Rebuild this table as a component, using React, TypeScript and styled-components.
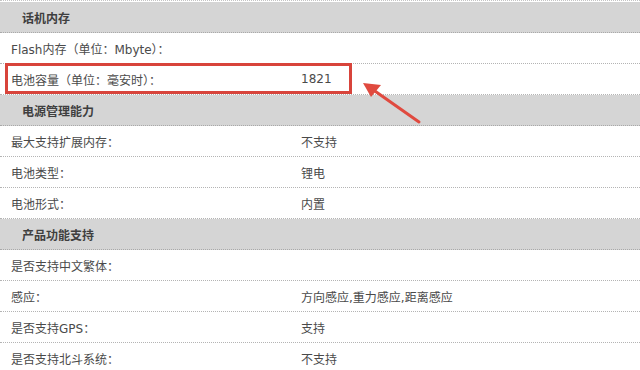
import React from "react";
import styled, { createGlobalStyle } from "styled-components";

// 参数表的数据
type Row = { kind: "group"; title: string } | { kind: "item"; label: string; value?: string; mark?: boolean };

const ROWS: Row[] = [
  { kind: "group", title: "话机内存" },
  { kind: "item", label: "Flash内存（单位：Mbyte）：" },
  { kind: "item", label: "电池容量（单位：毫安时）：", value: "1821", mark: true },
  { kind: "group", title: "电源管理能力" },
  { kind: "item", label: "最大支持扩展内存：", value: "不支持" },
  { kind: "item", label: "电池类型：", value: "锂电" },
  { kind: "item", label: "电池形式：", value: "内置" },
  { kind: "group", title: "产品功能支持" },
  { kind: "item", label: "是否支持中文繁体：" },
  { kind: "item", label: "感应：", value: "方向感应,重力感应,距离感应" },
  { kind: "item", label: "是否支持GPS：", value: "支持" },
  { kind: "item", label: "是否支持北斗系统：", value: "不支持" },
];

const GlobalStyle = createGlobalStyle`
  html, body {
    margin: 0;
    padding: 0;
    background: #fff;
    overflow: hidden;
  }
  body {
    font-family: "DejaVu Sans", "Noto Sans CJK SC", sans-serif;
  }
`;

const App: React.FC = () => {
  return (
    <>
      <GlobalStyle />
      <Page>
        <Table>
          {ROWS.map((row, i) =>
            row.kind === "group" ? (
              <GroupRow key={i}>{row.title}</GroupRow>
            ) : (
              <ItemRow key={i}>
                <Label>{row.label}</Label>
                <Value>{row.value}</Value>
                {row.mark && <Highlight />}
              </ItemRow>
            )
          )}
        </Table>
        {/* 指向电池容量的红色箭头 */}
        <Arrow width="80" height="60" viewBox="0 0 80 60">
          <line x1="59" y1="42" x2="12" y2="9" stroke="#e04a3f" strokeWidth="3" strokeLinecap="round" />
          <polygon points="3,3 21,5 11,17" fill="#e04a3f" />
        </Arrow>
      </Page>
    </>
  );
};

export default App;

const Page = styled.div`
  position: relative;
  width: 640px;
  height: 370px;
  overflow: hidden;
`;

const Table = styled.div`
  display: flex;
  flex-direction: column;
  padding-top: 1px;
  border-top: 1px dotted #c4c4c4;
`;

const GroupRow = styled.div`
  height: 30px;
  display: flex;
  align-items: center;
  padding-left: 22px;
  background: #d5d5d5;
  border-bottom: 1px dotted #a9a9a9;
  font-size: 12px;
  font-weight: bold;
  color: #3f3f3f;
`;

const ItemRow = styled.div`
  position: relative;
  height: 30px;
  display: grid;
  grid-template-columns: 301px 1fr;
  align-items: center;
  background: #fff;
  border-bottom: 1px dotted #b4b4b4;
  font-size: 12px;
  color: #4a4a4a;
`;

const Label = styled.div`
  padding-left: 11px;
  white-space: nowrap;
`;

const Value = styled.div`
  white-space: nowrap;
`;

const Highlight = styled.div`
  position: absolute;
  left: 5px;
  top: -1px;
  width: 347px;
  height: 31px;
  box-sizing: border-box;
  border: 3px solid #d8443b;
  pointer-events: none;
`;

const Arrow = styled.svg`
  position: absolute;
  left: 360px;
  top: 80px;
`;
